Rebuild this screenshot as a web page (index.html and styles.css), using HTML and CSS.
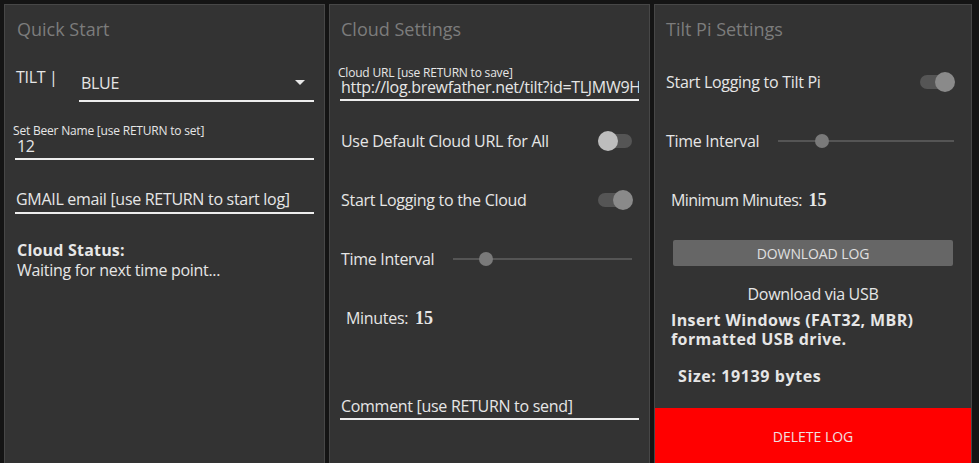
FILE: index.html
```html
<!DOCTYPE html>
<html>
<head>
<meta charset="utf-8">
<link rel="stylesheet" href="styles.css">
</head>
<body>
<div class="grid">
  <section class="panel">
    <h2 class="title">Quick Start</h2>
    <div class="tilt-row">
      <span class="tilt-label">TILT |</span>
      <div class="select">
        <span>BLUE</span>
        <svg class="caret" width="10" height="5" viewBox="0 0 10 5"><path d="M0 0h10L5 5z" fill="#e8e8e8"/></svg>
      </div>
    </div>
    <div class="field beer">
      <div class="field-label">Set Beer Name [use RETURN to set]</div>
      <div class="field-value indent">12</div>
    </div>
    <div class="field gmail">
      <div class="field-value">GMAIL email [use RETURN to start log]</div>
    </div>
    <div class="status">
      <div class="bold">Cloud Status:</div>
      <div>Waiting for next time point...</div>
    </div>
  </section>

  <section class="panel">
    <h2 class="title">Cloud Settings</h2>
    <div class="field url">
      <div class="field-label">Cloud URL [use RETURN to save]</div>
      <div class="field-value url-value">http://log.brewfather.net/tilt?id=TLJMW9H</div>
    </div>
    <div class="rows first-rows">
      <div class="row">
        <span>Use Default Cloud URL for All</span>
        <span class="toggle"><span class="knob"></span></span>
      </div>
      <div class="row">
        <span>Start Logging to the Cloud</span>
        <span class="toggle on"><span class="knob"></span></span>
      </div>
      <div class="row">
        <span>Time Interval</span>
        <span class="slider"><span class="thumb" style="left: 18%"></span></span>
      </div>
      <div class="row minutes">
        <span>Minutes: <b class="num">15</b></span>
      </div>
    </div>
    <div class="field comment">
      <div class="field-value">Comment [use RETURN to send]</div>
    </div>
  </section>

  <section class="panel">
    <h2 class="title">Tilt Pi Settings</h2>
    <div class="rows pi-rows">
      <div class="row">
        <span>Start Logging to Tilt Pi</span>
        <span class="toggle on"><span class="knob"></span></span>
      </div>
      <div class="row">
        <span>Time Interval</span>
        <span class="slider"><span class="thumb" style="left: 25%"></span></span>
      </div>
      <div class="row minutes">
        <span class="tight">Minimum Minutes: <b class="num">15</b></span>
      </div>
    </div>
    <button class="btn">DOWNLOAD LOG</button>
    <div class="usb">Download via USB</div>
    <div class="insert bold">Insert Windows (FAT32, MBR)<br>formatted USB drive.</div>
    <div class="size bold">Size: 19139 bytes</div>
    <div class="delete">DELETE LOG</div>
  </section>
</div>
</body>
</html>
```

FILE: styles.css
```css
html, body {
  margin: 0;
  padding: 0;
  background: #141414;
  overflow: hidden;
  height: 100%;
}

body {
  font-family: "Open Sans", sans-serif;
  font-size: 16px;
  letter-spacing: -0.3px;
  color: #e6e6e6;
}

.grid {
  display: grid;
  grid-template-columns: 321px 321px 318px;
  column-gap: 4px;
  padding: 4px 0 0 4px;
  height: 100vh;
  box-sizing: border-box;
}

.panel {
  background: #333333;
  border: 1px solid #474747;
  border-bottom: 0;
  padding: 0 10px;
  display: flex;
  flex-direction: column;
  min-height: 0;
  overflow: hidden;
}

.panel > * {
  flex-shrink: 0;
}

.title {
  margin: 0;
  height: 40px;
  padding: 12px 0 0 1px;
  box-sizing: border-box;
  font-size: 18px;
  line-height: 24px;
  font-weight: 400;
  letter-spacing: 0;
  color: #7c7c7c;
}

.panel:first-child .title {
  padding-left: 2px;
}

.tilt-row {
  margin-top: 21px;
  height: 36px;
  display: flex;
}

.tilt-label {
  width: 63px;
  padding-left: 1px;
  line-height: 22px;
}

.select {
  flex: 1;
  border-bottom: 2px solid #eeeeee;
  display: flex;
  align-items: center;
  justify-content: space-between;
  padding: 0 9px 0 2px;
}

.caret {
  margin-top: -2px;
}

.field {
  border-bottom: 2px solid #eeeeee;
}

.field-label {
  font-size: 12px;
  line-height: 13px;
  margin-left: -2px;
  letter-spacing: -0.2px;
}

.field-value {
  line-height: 18px;
  padding-bottom: 3px;
  padding-left: 1px;
  white-space: nowrap;
}

.indent {
  padding-left: 2px;
}

.beer {
  margin-top: 22px;
}

.gmail {
  margin-top: 29px;
}

.gmail .field-value {
  line-height: 20px;
}

.status {
  margin-top: 26px;
  padding-left: 2px;
  line-height: 20px;
}

.bold {
  font-weight: 700;
  letter-spacing: 0.2px;
}

.url {
  margin-top: 21px;
}

.url-value {
  line-height: 17px;
  padding-left: 1px;
  overflow: hidden;
}

.rows {
  display: flex;
  flex-direction: column;
}

.first-rows {
  margin-top: 10px;
}

.pi-rows {
  margin-top: 7px;
}

.row {
  height: 59px;
  display: flex;
  align-items: center;
  justify-content: space-between;
  padding: 0 7px 0 1px;
}

.minutes {
  padding-left: 6px;
}

.tight {
  letter-spacing: -0.6px;
}

.num {
  font-family: "Liberation Serif", "DejaVu Serif", serif;
  font-weight: 700;
  font-size: 18px;
  letter-spacing: 0;
  margin-left: 3px;
}

.toggle {
  position: relative;
  width: 34px;
  height: 14px;
  border-radius: 7px;
  background: #555555;
}

.knob {
  position: absolute;
  top: -3px;
  left: 0;
  width: 20px;
  height: 20px;
  border-radius: 50%;
  background: #bdbdbd;
}

.toggle.on .knob {
  left: 15px;
  background: #8a8a8a;
}

.slider {
  position: relative;
  flex: 1;
  height: 2px;
  margin-left: 19px;
  background: #555555;
}

.thumb {
  position: absolute;
  top: -6px;
  width: 14px;
  height: 14px;
  margin-left: -7px;
  border-radius: 50%;
  background: #7a7a7a;
}

.comment {
  margin-top: 49px;
}

.comment .field-value {
  line-height: 20px;
  padding-bottom: 2px;
}

.btn {
  margin: 11px 8px 0;
  height: 26px;
  border: none;
  border-radius: 2px;
  background: #666666;
  color: #e0e0e0;
  font-family: "Open Sans", sans-serif;
  font-size: 14px;
  letter-spacing: -0.1px;
  padding: 0;
}

.usb {
  margin-top: 18px;
  text-align: center;
  line-height: 20px;
}

.insert {
  margin-top: 7px;
  padding-left: 6px;
  line-height: 19px;
  letter-spacing: 0.4px;
}

.size {
  margin-top: 17px;
  padding-left: 13px;
  line-height: 20px;
  letter-spacing: 0.6px;
}

.delete {
  margin: 22px -10px 0;
  background: #ff0000;
  color: #f0e0e0;
  font-size: 14px;
  letter-spacing: 0;
  text-align: center;
  padding-top: 19px;
  line-height: 20px;
  flex: 1 0 auto;
}
```
